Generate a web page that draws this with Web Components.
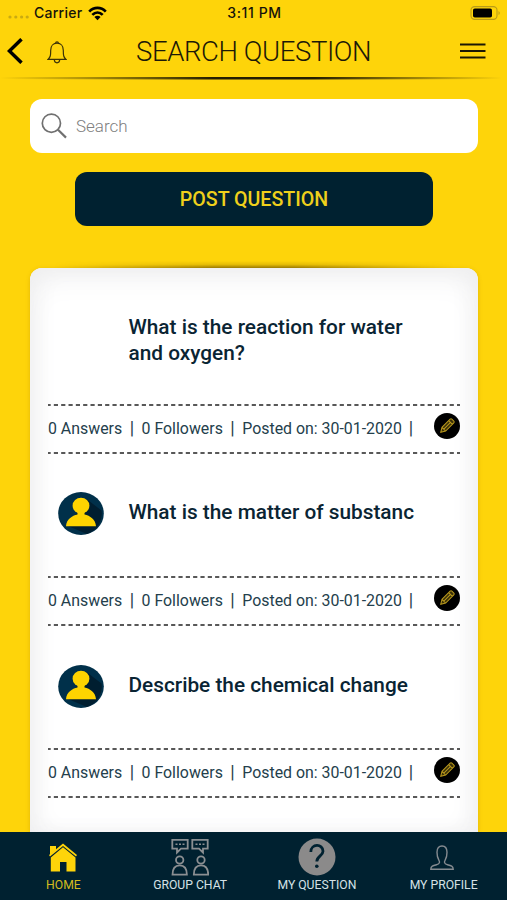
<!DOCTYPE html>
<html lang="en">
<head>
<meta charset="utf-8">
<title>Search Question</title>
<style>
  html, body {
    margin: 0;
    height: 100%;
    overflow: hidden;
    font-family: Roboto, "Liberation Sans", sans-serif;
    background: #fed40a;
  }
</style>
</head>
<body>
<question-app></question-app>

<script>
class StatusBar extends HTMLElement {
  constructor() {
    super();
    this.attachShadow({ mode: 'open' });
    this.shadowRoot.innerHTML = `
      <style>
        :host {
          display: grid;
          grid-template-columns: 1fr auto 1fr;
          align-items: center;
          height: 26px;
          padding: 0 6px 0 8px;
          font: 500 14px/26px Inter, sans-serif;
          color: #15130a;
        }
        .left { display: flex; align-items: center; }
        .left svg { margin-left: 6px; }
        .left .dots { margin: 8px 5px 0 0; }
        .carrier { letter-spacing: 0.25px; }
        .time { letter-spacing: 0.6px; }
        .right { display: flex; justify-content: flex-end; }
      </style>
      <div class="left">
        <svg class="dots" width="21" height="4" fill="#c9aa12">
          <circle cx="2" cy="2" r="1.6"/><circle cx="7.8" cy="2" r="1.6"/>
          <circle cx="13.6" cy="2" r="1.6"/><circle cx="19.2" cy="2" r="1.6"/>
        </svg>
        <span class="carrier">Carrier</span>
        <svg width="19" height="15" viewBox="0 0 19 15" fill="none" stroke="#000" stroke-width="2.7">
          <path d="M1.2 5.6C6 .6 13 .6 17.8 5.6"/>
          <path d="M4.3 8.9C7.4 5.9 11.6 5.9 14.7 8.9"/>
          <path d="M9.5 14.2L6.4 11.1C8.2 9.4 10.8 9.4 12.6 11.1Z" fill="#000" stroke="none"/>
        </svg>
      </div>
      <span class="time"><slot></slot></span>
      <div class="right">
        <svg width="31" height="14" viewBox="0 0 31 14">
          <rect x="1" y=".6" width="26" height="12.8" rx="3.6" fill="none" stroke="#b99c18" stroke-width="1.1"/>
          <rect x="3" y="2.4" width="19" height="9.2" rx="1.8" fill="#000"/>
          <path d="M28.6 4.9q2 2.1 0 4.2z" fill="#a98f1b"/>
        </svg>
      </div>
    `;
  }
}
customElements.define('status-bar', StatusBar);

class NavBar extends HTMLElement {
  constructor() {
    super();
    this.attachShadow({ mode: 'open' });
    this.shadowRoot.innerHTML = `
      <style>
        :host { display: block; color: #1c1907; }
        .row {
          display: grid;
          grid-template-columns: 136px 1fr auto;
          align-items: center;
          height: 50.5px;
          padding-right: 21px;
        }
        .icons { display: flex; align-items: center; padding-left: 7px; }
        .bell { margin-left: 24px; margin-top: 2px; }
        h1 {
          margin: 2px 0 0;
          font-size: 27.5px;
          font-weight: 300;
          line-height: 48px;
          letter-spacing: -0.4px;
          white-space: nowrap;
        }
        .rule {
          height: 3px;
          background: linear-gradient(90deg, rgba(25,20,0,0) 0%, rgba(25,20,0,.3) 15%, rgba(25,20,0,.95) 42%, rgba(25,20,0,.95) 62%, rgba(25,20,0,.35) 85%, rgba(25,20,0,0) 99%);
          clip-path: polygon(0 20%, 40% 0, 60% 0, 100% 20%, 100% 80%, 60% 100%, 40% 100%, 0 80%);
        }
      </style>
      <div class="row">
        <div class="icons">
          <svg width="16" height="26" viewBox="0 0 16 26" fill="none" stroke="#000" stroke-width="3.5">
            <path d="M14.5 1.2L2.4 13L14.5 24.8"/>
          </svg>
          <svg class="bell" width="20" height="23" viewBox="0 0 20 23" fill="none" stroke="#3c3308" stroke-width="1.2">
            <path d="M1 18.4C3.4 16.2 3.7 14.6 3.7 9.2C3.7 5 6.3 2.2 10 2.2S16.3 5 16.3 9.2C16.3 14.6 16.6 16.2 19 18.4Z"/>
            <path d="M8.6 2.2C8.6 .4 11.4 .4 11.4 2.2M7.3 18.8C7.5 22.8 12.5 22.8 12.7 18.8"/>
          </svg>
        </div>
        <h1><slot></slot></h1>
        <svg width="26" height="16" viewBox="0 0 26 16" stroke="#1c1804" stroke-width="2.2">
          <path d="M0 1.5H25.5M0 8H25.5M0 14.5H25.5"/>
        </svg>
      </div>
      <div class="rule"></div>
    `;
  }
}
customElements.define('nav-bar', NavBar);

class SearchField extends HTMLElement {
  constructor() {
    super();
    this.attachShadow({ mode: 'open' });
    this.shadowRoot.innerHTML = `
      <style>
        :host {
          display: flex;
          align-items: center;
          box-sizing: border-box;
          height: 54px;
          padding-left: 11px;
          border-radius: 12px;
          background: #fff;
          font-size: 17px;
          font-weight: 300;
          color: #808080;
        }
        span { margin-left: 9px; }
      </style>
      <svg width="26" height="26" viewBox="0 0 26 26" fill="none" stroke="#707070">
        <circle cx="10.4" cy="10.2" r="9.1" stroke-width="1.7"/>
        <path d="M17 16.8L25 24.6" stroke-width="2.2"/>
      </svg>
      <span><slot></slot></span>
    `;
  }
}
customElements.define('search-field', SearchField);

class PostButton extends HTMLElement {
  constructor() {
    super();
    this.attachShadow({ mode: 'open' });
    this.shadowRoot.innerHTML = `
      <style>
        :host {
          display: block;
          height: 54px;
          border-radius: 12px;
          background: #002130;
          font-size: 19.6px;
          font-weight: 500;
          line-height: 56px;
          text-align: center;
          color: #efd01b;
        }
      </style>
      <slot></slot>
    `;
  }
}
customElements.define('post-button', PostButton);

class QuestionItem extends HTMLElement {
  constructor() {
    super();
    this.attachShadow({ mode: 'open' });
    const avatar = this.hasAttribute('avatar') ? `
      <svg width="46" height="43" viewBox="0 0 46 43">
        <ellipse cx="23" cy="21.5" rx="22.8" ry="21.5" fill="#00304a"/>
        <path d="M28.5 7L43.5 18.5A23 21.5 0 0 1 29 42L10 34Z" fill="#001e30"/>
        <ellipse cx="23" cy="13.7" rx="8.4" ry="7.9" fill="#fed400"/>
        <path d="M8 34.3C8.5 27 14 23.8 19.5 22.5V19H26.5V22.5C32 23.8 37.5 27 38 34.3Z" fill="#fed400"/>
      </svg>` : '';
    const dash = `
      <svg class="dash" width="412" height="2">
        <path d="M0 1H412" stroke="#222" stroke-width="1.5" stroke-dasharray="4.2 3.13" stroke-dashoffset="1.5"/>
      </svg>`;
    this.shadowRoot.innerHTML = `
      <style>
        :host {
          display: block;
          height: 172.2px;
        }
        .head {
          display: grid;
          grid-template-columns: 80.5px 1fr;
          align-items: center;
          height: 123.5px;
        }
        .pic { display: flex; padding-left: 10px; }
        h2 {
          margin: 0 0 3px;
          font-size: 20.8px;
          font-weight: 500;
          line-height: 26px;
          white-space: pre;
          color: #0a2433;
        }
        .dash { display: block; }
        .meta {
          display: flex;
          align-items: center;
          height: 46px;
          font-size: 15.9px;
          color: #24404c;
        }
        .meta span { white-space: nowrap; }
        .meta .bar { width: 19.4px; margin-top: -2px; text-align: center; font-size: 18px; }
        .meta .bar.last { width: 18px; }
        .edit { margin-left: auto; margin-top: -5px; }
      </style>
      <div class="head">
        <div class="pic">${avatar}</div>
        <h2>${this.getAttribute('question')}</h2>
      </div>
      ${dash}
      <div class="meta">
        <span class="answers">${this.getAttribute('answers')} Answers</span>
        <span class="bar">|</span>
        <span class="followers">${this.getAttribute('followers')} Followers</span>
        <span class="bar">|</span>
        <span class="posted">Posted on: ${this.getAttribute('posted')}</span>
        <span class="bar last">|</span>
        <svg class="edit" width="26" height="26" viewBox="0 0 26 26">
          <circle cx="13" cy="13" r="13" fill="#000"/>
          <g transform="translate(13 13) rotate(-45)" fill="#3a3008" stroke="#b8981c" stroke-width="1">
            <path d="M-8.8 0L-4.5 -2.6H7Q8.3 -2.6 8.3 -1.4V1.4Q8.3 2.6 7 2.6H-4.5ZM-4.5 -2.6V2.6M5 -2.6V2.6M-4.5 0H5"/>
          </g>
        </svg>
      </div>
      ${dash}
    `;
  }
}
customElements.define('question-item', QuestionItem);

class QuestionCard extends HTMLElement {
  constructor() {
    super();
    this.attachShadow({ mode: 'open' });
    this.shadowRoot.innerHTML = `
      <style>
        :host {
          display: flex;
          flex-direction: column;
          min-height: 0;
        }
        /* soft shadow that fades towards both corners */
        .lift {
          flex: none;
          height: 7px;
          margin: -7px 24px 0;
          background: linear-gradient(0deg, rgba(95,70,0,.6), rgba(130,98,0,.2) 50%, rgba(160,120,0,0));
          mask-image: linear-gradient(90deg, transparent, #000 40%, #000 60%, transparent);
        }
        .sheet {
          flex: 1;
          min-height: 0;
          overflow: hidden;
          padding: 12px 18px 0;
          border-radius: 12px 12px 0 0;
          background: #fff;
          box-shadow: inset 0 14px 34px -8px #eeeeef, inset 10px 0 28px -8px #eeeeef, inset -10px 0 28px -8px #eeeeef, 0 1px 4px rgba(150,110,0,.28);
        }
      </style>
      <div class="lift"></div>
      <div class="sheet"><slot></slot></div>
    `;
  }
}
customElements.define('question-card', QuestionCard);

class TabItem extends HTMLElement {
  constructor() {
    super();
    this.attachShadow({ mode: 'open' });
    this.shadowRoot.innerHTML = `
      <style>
        :host {
          display: flex;
          flex-direction: column;
          align-items: center;
          color: #d5e1e6;
        }
        :host([active]) { color: #d3bc1f; }
        .icon {
          display: flex;
          align-items: center;
          justify-content: center;
          height: 40px;
          margin-top: 5px;
        }
        .label { font-size: 12.2px; line-height: 16px; white-space: nowrap; }
      </style>
      <div class="icon"><slot name="icon"></slot></div>
      <div class="label"><slot></slot></div>
    `;
  }
}
customElements.define('tab-item', TabItem);

class TabBar extends HTMLElement {
  constructor() {
    super();
    this.attachShadow({ mode: 'open' });
    this.shadowRoot.innerHTML = `
      <style>
        :host {
          display: grid;
          grid-template-columns: repeat(4, 1fr);
          height: 68px;
          background: #002130;
        }
        svg { display: block; }
        .profile { margin-right: 3px; }
      </style>
      <tab-item active>
        <svg slot="icon" width="30" height="29" viewBox="0 0 30 29" fill="#fed40a">
          <path d="M2 3H8V7L2 12Z"/>
          <path d="M15 .5L29 12L28 13.6L15 3L2 13.6L1 12Z"/>
          <path d="M15 4.3L27.500 14.500V28.500H18.500V19H12V28.500H2.800V14.500Z"/>
        </svg>
        HOME
      </tab-item>
      <tab-item>
        <svg slot="icon" width="38" height="38" viewBox="0 0 38 38" fill="none" stroke="#8b8f92" stroke-width="1.8">
          <path d="M1.3 1.8H16.7V10.6H10L6 14.5V10.6H1.3ZM21.3 1.8H36.7V10.6H32V14.5L28 10.6H21.3Z"/>
          <path d="M4.5 6.2H6.5M8 6.2H10M11.5 6.2H13.5M24.5 6.2H26.5M28 6.2H30M31.5 6.2H33.5" stroke-width="1.5"/>
          <circle cx="8.7" cy="22" r="3.7"/><circle cx="30" cy="22" r="3.7"/>
          <path d="M1.5 36.7C1.5 30.5 4.2 27.3 8.7 27.3S15.9 30.5 15.9 36.7ZM22.8 36.7C22.8 30.5 25.5 27.3 30 27.3S37.2 30.5 37.2 36.7Z"/>
        </svg>
        GROUP CHAT
      </tab-item>
      <tab-item>
        <svg slot="icon" width="38" height="38" viewBox="0 0 38 38" fill="none">
          <circle cx="19" cy="19" r="18.5" fill="#8b8a8a"/>
          <path d="M12.8 14C12.8 5.4 25 5.4 25 13.2C25 17.7 18.8 18.1 18.8 23.5" stroke="#002130" stroke-width="2.8"/>
          <circle cx="18.8" cy="28.3" r="1.8" fill="#002130"/>
        </svg>
        MY QUESTION
      </tab-item>
      <tab-item>
        <svg slot="icon" class="profile" width="24" height="25" viewBox="0 0 24 25" fill="none" stroke="#858b90" stroke-width="1.4">
          <path d="M.8 24.2C.8 21 3 20.5 6.5 19.7C10.3 18.8 9.8 16.8 8.8 15C7.5 13 7 10.5 7 7.3C7 3 9 1 12 1S17 3 17 7.3C17 10.5 16.5 13 15.2 15C14.2 16.8 13.7 18.8 17.5 19.7C21 20.5 23.2 21 23.2 24.2Z"/>
        </svg>
        MY PROFILE
      </tab-item>
    `;
  }
}
customElements.define('tab-bar', TabBar);

class QuestionApp extends HTMLElement {
  constructor() {
    super();
    this.attachShadow({ mode: 'open' });
    this.shadowRoot.innerHTML = `
      <style>
        :host {
          display: flex;
          flex-direction: column;
          height: 100vh;
          background: #fed40a;
        }
        search-field { margin: 19px 29px 0 30px; }
        post-button { margin: 19px 74px 0 75px; }
        question-card { flex: 1; margin: 42.5px 29px 0 30px; }
        status-bar, nav-bar, search-field, post-button, tab-bar { flex: none; }
      </style>
      <status-bar>3:11 PM</status-bar>
      <nav-bar>SEARCH QUESTION</nav-bar>
      <search-field>Search</search-field>
      <post-button>POST QUESTION</post-button>
      <question-card>
        <question-item question="What is the reaction for water&#10;and oxygen?" answers="0" followers="0" posted="30-01-2020"></question-item>
        <question-item avatar question="What is the matter of substanc" answers="0" followers="0" posted="30-01-2020"></question-item>
        <question-item avatar question="Describe the chemical change" answers="0" followers="0" posted="30-01-2020"></question-item>
      </question-card>
      <tab-bar></tab-bar>
    `;
  }
}
customElements.define('question-app', QuestionApp);
</script>
</body>
</html>
